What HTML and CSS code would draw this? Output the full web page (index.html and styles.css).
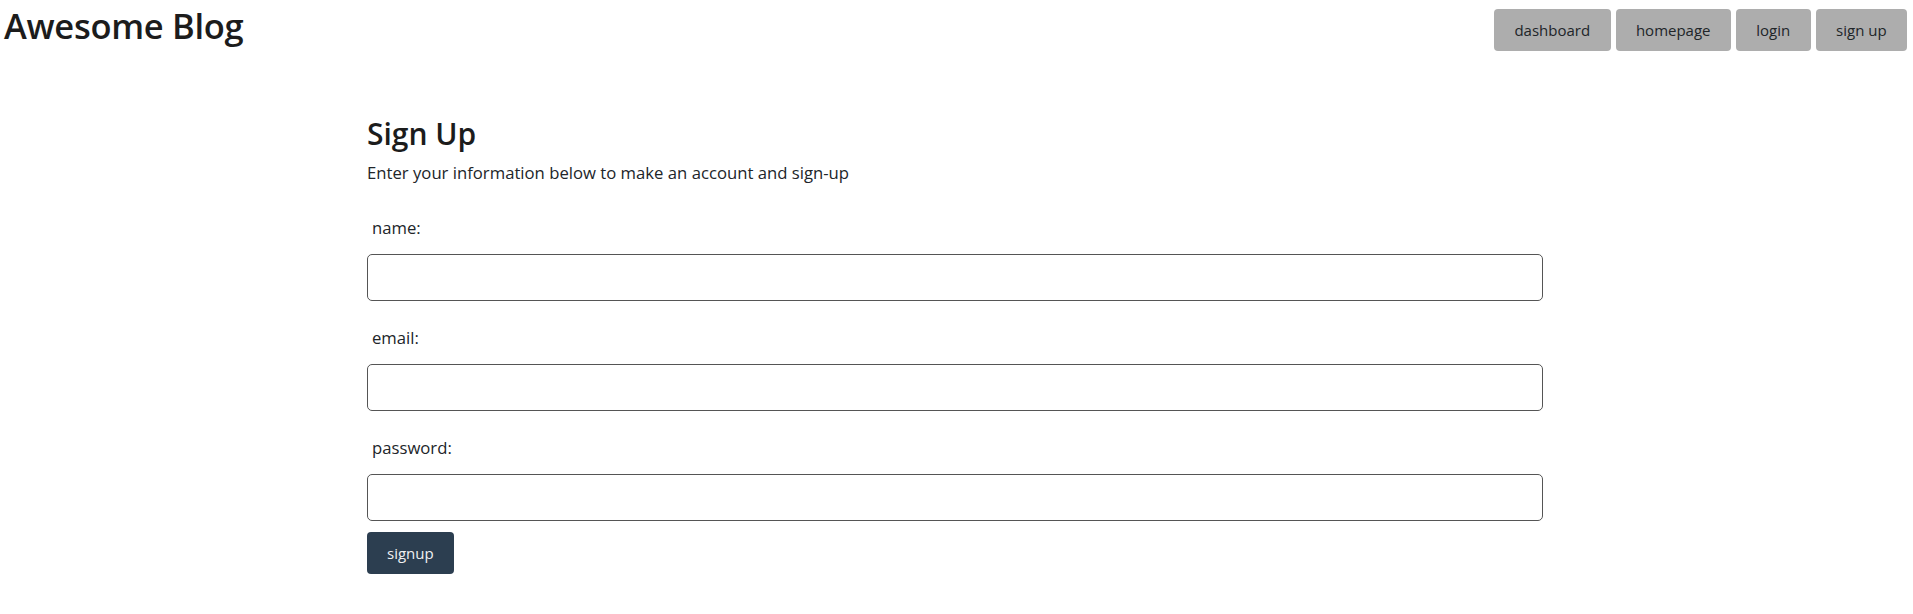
FILE: index.html
```html
<!DOCTYPE html>
<html lang="en">
<head>
<meta charset="utf-8">
<title>Awesome Blog</title>
<link rel="stylesheet" href="styles.css">
</head>
<body>
<header class="topbar">
  <h1 class="brand">Awesome Blog</h1>
  <nav class="nav">
    <a class="nav-btn" href="#">dashboard</a>
    <a class="nav-btn" href="#">homepage</a>
    <a class="nav-btn" href="#">login</a>
    <a class="nav-btn" href="#">sign up</a>
  </nav>
</header>
<main class="main">
  <section class="signup">
    <h2 class="title">Sign Up</h2>
    <p class="subtitle">Enter your information below to make an account and sign-up</p>
    <form class="form">
      <label class="label" for="name">name:</label>
      <input class="input" id="name" type="text">
      <label class="label" for="email">email:</label>
      <input class="input" id="email" type="email">
      <label class="label" for="password">password:</label>
      <input class="input" id="password" type="password">
      <button class="submit" type="button">signup</button>
    </form>
  </section>
</main>
</body>
</html>
```

FILE: styles.css
```css
* { box-sizing: border-box; }
html, body { margin: 0; padding: 0; background: #fff; }
body {
  font-family: "Open Sans", "Noto Sans", sans-serif;
  color: #212529;
  font-size: 16px;
  line-height: 1.5;
}
.topbar {
  display: flex;
  justify-content: space-between;
  align-items: flex-start;
  padding: 0 6px 0 4px;
}
.brand {
  margin: 0;
  font-size: 34.5px;
  font-weight: 600;
  line-height: 52px;
  color: #1c1c1c;
  letter-spacing: -0.3px;
}
.nav {
  display: flex;
  gap: 5px;
  padding-top: 9px;
}
.nav-btn {
  display: block;
  height: 42px;
  line-height: 42px;
  padding: 0 20.4px;
  background: #adadad;
  color: #212529;
  border-radius: 4px;
  text-decoration: none;
  font-size: 15px;
}
.main {
  display: flex;
  justify-content: center;
  padding-top: 62px;
  padding-right: 3px;
}
.signup {
  width: 1176px;
}
.title {
  margin: 0;
  font-size: 30px;
  font-weight: 600;
  line-height: 40px;
  color: #1c1c1c;
}
.subtitle {
  margin: 6px 0 0;
  font-size: 16.7px;
  line-height: 26px;
}
.form {
  display: flex;
  flex-direction: column;
  align-items: flex-start;
  margin-top: 29px;
}
.label {
  font-size: 16.7px;
  line-height: 26px;
  padding-left: 5px;
  margin-bottom: 13px;
}
.input {
  width: 100%;
  height: 47px;
  border: 1px solid #555;
  border-radius: 5px;
  margin: 0 0 24px;
  font: inherit;
  padding: 0 10px;
}
.input:last-of-type { margin-bottom: 11px; }
.submit {
  height: 42px;
  padding: 0 20px;
  border: 0;
  border-radius: 4px;
  background: #2c3e50;
  color: #f0f0f0;
  font-family: inherit;
  font-size: 15px;
}
```
